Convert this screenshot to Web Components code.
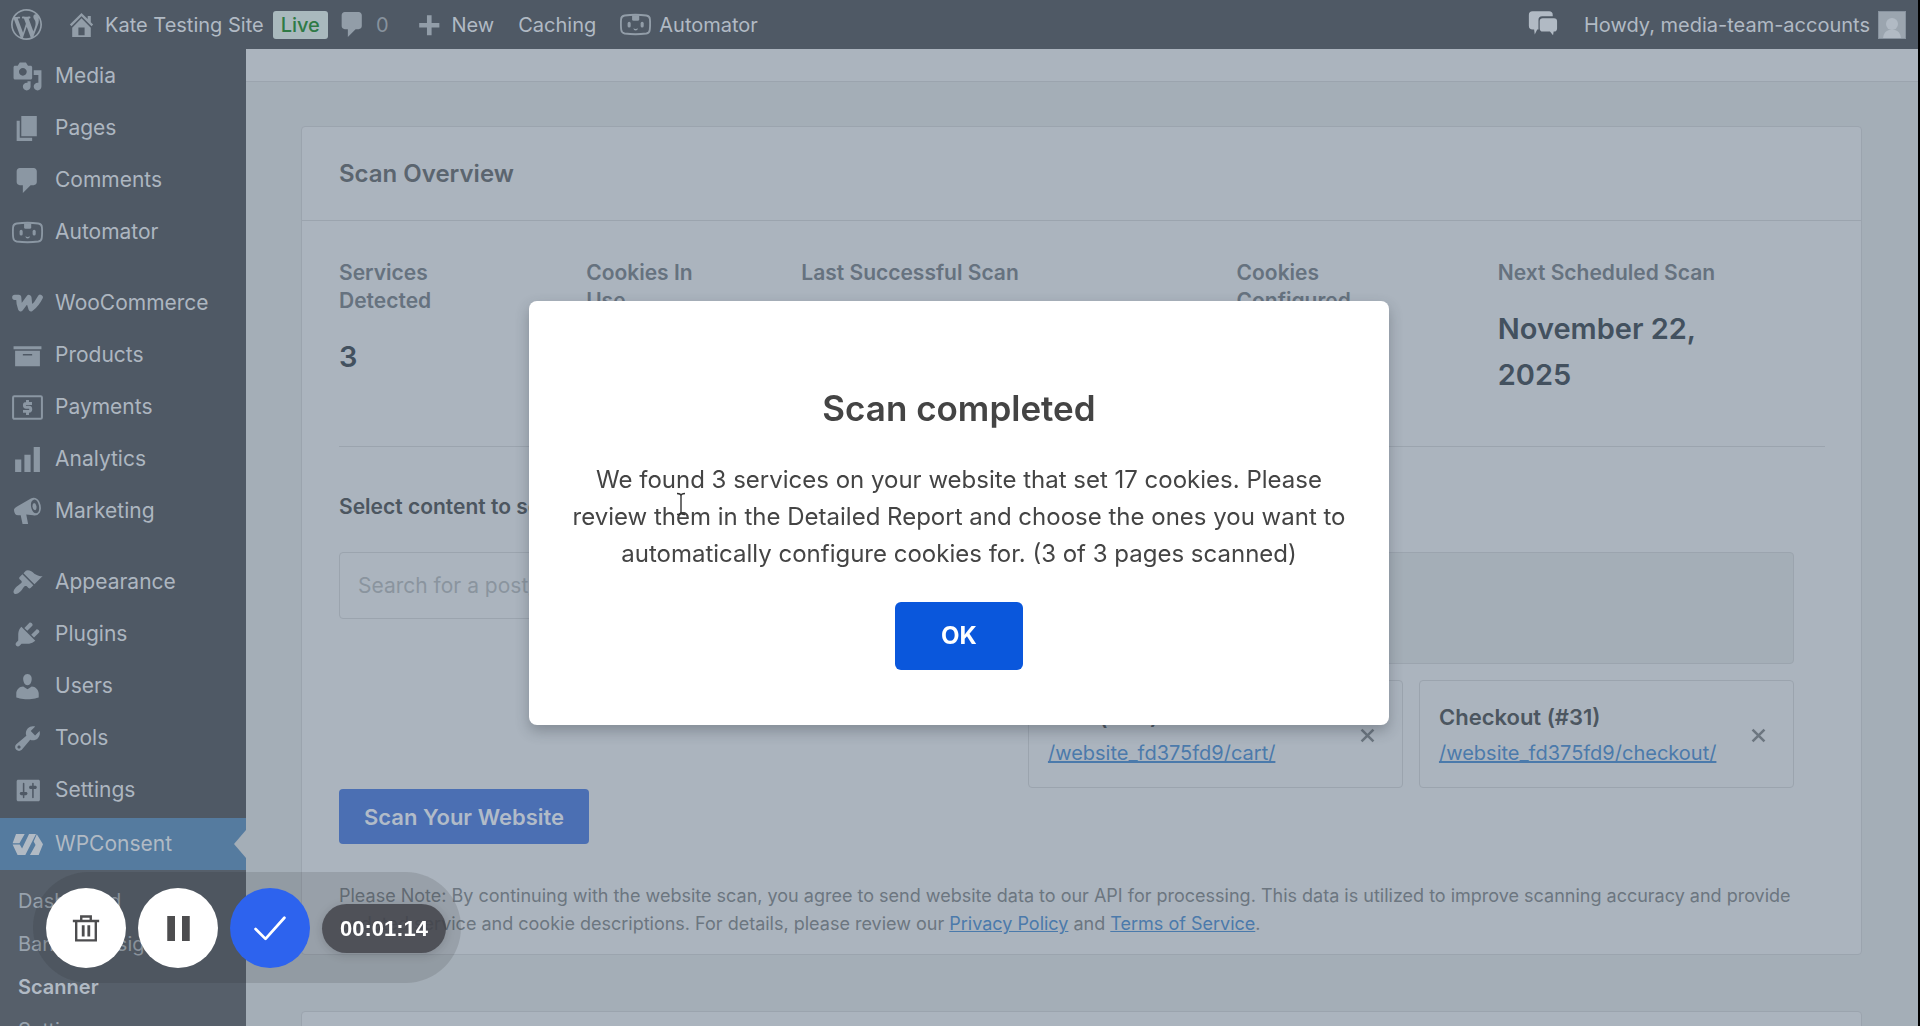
<!DOCTYPE html>
<html lang="en">
<head>
<meta charset="utf-8">
<title>Scanner - WPConsent</title>
<style>
  html, body {
    margin: 0;
    height: 100%;
    overflow: hidden;
  }
  body {
    font-family: Inter, "Liberation Sans", sans-serif;
    font-size: 20px;
    line-height: 28px;
    background: #000;
    --surface: #abb4be;
    --page: #a4aeb7;
    --chrome: #4f5965;
    --line: #9ba4ae;
    --link: #4b7aab;
    --text: #4c5660;
    --muted: #6c7680;
  }
</style>
</head>
<body>
<admin-shell>
  <admin-bar slot="bar"></admin-bar>
  <admin-menu slot="menu"></admin-menu>
  <scan-card heading="Scan Overview">
    <scan-stats>
      <scan-stat label="Services Detected">3</scan-stat>
      <scan-stat label="Cookies In Use">17</scan-stat>
      <scan-stat label="Last Successful Scan">November 21, 2025</scan-stat>
      <scan-stat label="Cookies Configured">0</scan-stat>
      <scan-stat label="Next Scheduled Scan">November 22, 2025</scan-stat>
    </scan-stats>
    <scan-form></scan-form>
  </scan-card>
  <scan-card></scan-card>
</admin-shell>
<alert-dialog heading="Scan completed">We found 3 services on your website that set 17 cookies. Please review them in the Detailed Report and choose the ones you want to automatically configure cookies for. (3 of 3 pages scanned)</alert-dialog>
<recorder-bar time="00:01:14"></recorder-bar>
<text-cursor></text-cursor>

<script>
const robot = `<path fill="none" stroke="currentColor" stroke-width="1.2" d="M3 4.2Q10 3.2 17 4.2Q19.2 4.5 19.3 6.6Q19.6 10 19.2 13.4Q19 15.4 17 15.8Q10 16.8 3 15.8Q1 15.4.8 13.4Q.4 10 .7 6.6Q.8 4.5 3 4.2z"/>
  <path d="M7.8 4h4.6v2.6q0 1-1 1H8.8q-1 0-1-1z"/><rect x="4.9" y="8.3" width="2" height="3.6" rx="1"/><rect x="13.3" y="8.3" width="2" height="3.6" rx="1"/>
  <path d="M8.6 12.4q1.5.9 3 0-.2 1.5-1.5 1.5t-1.5-1.5z"/>`;

const icons = {
  wordpress: '<path d="M20 10c0-5.51-4.49-10-10-10C4.48 0 0 4.49 0 10c0 5.52 4.48 10 10 10 5.51 0 10-4.48 10-10zM7.78 15.37L4.37 6.22c.55-.02 1.17-.08 1.17-.08.5-.06.44-1.13-.06-1.11 0 0-1.45.11-2.37.11-.18 0-.37 0-.58-.01C4.12 2.69 6.87 1.11 10 1.11c2.33 0 4.45.87 6.05 2.34-.68-.11-1.65.39-1.65 1.58 0 .74.45 1.36.9 2.1.35.61.55 1.36.55 2.46 0 1.49-1.4 5-1.4 5l-3.03-8.37c.54-.02.82-.17.82-.17.5-.05.44-1.25-.06-1.22 0 0-1.44.12-2.38.12-.87 0-2.33-.12-2.33-.12-.5-.03-.56 1.2-.06 1.22l.92.08 1.26 3.41zM17.41 10c.24-.64.74-1.87.43-4.25.7 1.29 1.05 2.71 1.05 4.25 0 3.29-1.73 6.24-4.4 7.78.97-2.59 1.94-5.2 2.92-7.78zM6.1 18.09C3.12 16.65 1.11 13.53 1.11 10c0-1.3.23-2.48.72-3.59C3.25 10.3 4.67 14.2 6.1 18.09zm4.03-6.63l2.58 6.98c-.86.29-1.76.45-2.71.45-.79 0-1.57-.11-2.29-.33.81-2.38 1.62-4.74 2.42-7.1z"/>',
  home: '<path d="M16 8.5l1.53 1.53-1.06 1.06L10 4.6l-6.47 6.49-1.06-1.06L10 2.5l4 4v-2h2v4zm-6-2.46l6 5.99V18H4v-5.97zM12 17v-5H8v5h4z"/>',
  comments: '<path d="M5 2h9c1.1 0 2 .9 2 2v7c0 1.1-.9 2-2 2h-2l-5 5v-5H5c-1.1 0-2-.9-2-2V4c0-1.1.9-2 2-2z"/>',
  plus: '<path d="M17 9v3h-5v5H9v-5H4V9h5V4h3v5h5z"/>',
  robot,
  chat: '<path d="M3.6 1.5h10.6q2.4 0 2.4 2.4v.7H9.8Q7.4 4.6 7.4 7v6.2H6.6L5 16.4 4.6 13.2H3.6Q1.2 13.2 1.2 10.8V3.9Q1.2 1.5 3.6 1.5z"/><path d="M10.2 5.9h7.2q2 0 2 2v4.6q0 2-2 2h-.2l-.4 2.4-2-2.4h-4.6q-2 0-2-2V7.9q0-2 2-2z"/>',
  media: '<path d="M13 11V4c0-.55-.45-1-1-1h-1.67L9 1H5L3.67 3H2c-.55 0-1 .45-1 1v7c0 .55.45 1 1 1h10c.55 0 1-.45 1-1zM7 4.5c1.38 0 2.5 1.12 2.5 2.5S8.38 9.5 7 9.5 4.5 8.38 4.5 7 5.62 4.5 7 4.5zM14 6h5v10.5c0 1.38-1.12 2.5-2.5 2.5S14 17.88 14 16.5s1.12-2.5 2.5-2.5c.17 0 .34.02.5.05V9h-3V6zm-4 8.05V13h2v3.5c0 1.38-1.12 2.5-2.5 2.5S7 17.88 7 16.5 8.12 14 9.5 14c.17 0 .34.02.5.05z"/>',
  pages: '<path d="M6 15V2h10v13H6zm-1 1h8v2H3V5h2v11z"/>',
  woo: '<path fill="none" stroke="currentColor" stroke-width="3.4" stroke-linecap="round" stroke-linejoin="round" d="M1.8 6H4.3Q4.3 10 5.6 13.4L10.9 6.2Q10.9 10 12.3 13.4Q16 10.5 18.2 6"/>',
  archive: '<path d="M19 4v2H1V4h18zM2 7h16v10H2V7zm11 3V9H7v1h6z"/>',
  payments: '<rect x=".7" y="2.7" width="18.6" height="14.6" rx=".8" fill="none" stroke="currentColor" stroke-width="1.3"/><path fill="none" stroke="currentColor" stroke-width="1.9" d="M12.9 7.4H9.2Q8 7.4 8 8.6T9.2 9.9H10.9Q12.100 9.900 12.100 11.200T10.900 12.500H7.100M10 5.200V7.400M10 12.500V14.800"/>',
  chart: '<path d="M18 18V2h-4v16h4zm-6 0V7H8v11h4zm-6 0v-8H2v8h4z"/>',
  megaphone: '<path fill-rule="evenodd" d="M1.3 9.2Q1.2 7.7 3 6.900L12.200 1.600Q15.500.2 17.600 3.600 19.500 7.400 18 10.700 16.600 13 13.600 12.400L9.200 12 10.400 18H6.800L5.600 12.400H4.200Q1.500 12.600 1.300 9.200zM14.400 2.300Q11.700 3 12.300 7 13.200 11.300 15.700 11.200 18 10.400 17.400 6.300 16.400 2.200 14.400 2.300zM14 4.600Q15.300 4.400 15.800 6.600 16 8.900 14.900 9.200 13.600 9 13.200 7 13.100 5 14 4.600z"/>',
  appearance: '<path d="M14.48 11.06L7.41 3.99l1.5-1.5c.5-.56 2.3-.47 3.51.32 1.21.8 1.43 1.28 2.91 2.1 1.18.64 2.45 1.26 4.45.85zm-.71.71L6.7 4.7 4.93 6.47c-.39.39-.39 1.02 0 1.41l1.06 1.06c.39.39.39 1.03 0 1.42-.6.6-1.43 1.11-2.21 1.69-.35.26-.7.53-1.01.84C1.43 14.23.4 16.08 1.4 17.07c.99 1 2.84-.03 4.18-1.36.31-.31.58-.66.85-1.02.57-.78 1.08-1.61 1.69-2.21.39-.39 1.02-.39 1.41 0l1.06 1.06c.39.39 1.02.39 1.41 0z"/>',
  plugins: '<path d="M13.11 4.36L9.87 7.6 8 5.73l3.24-3.24c.35-.34 1.05-.2 1.56.32.52.51.66 1.21.31 1.55zm-8 1.77l.91-1.12 9.01 9.01-1.19.84c-.71.71-2.63 1.16-3.82 1.16H6.14L4.9 17.26c-.59.59-1.54.59-2.12 0-.59-.58-.59-1.53 0-2.12l1.24-1.24v-3.88c0-1.13.4-3.19 1.09-3.89zm7.26 3.97l3.24-3.24c.34-.35 1.04-.21 1.55.31.52.51.66 1.21.31 1.55l-3.24 3.25z"/>',
  users: '<path d="M10 9.25c-2.27 0-2.73-3.44-2.73-3.44C7 4.02 7.82 2 9.97 2c2.16 0 2.98 2.02 2.71 3.81 0 0-.41 3.44-2.68 3.44zm0 2.57L12.72 10c2.39 0 4.52 2.33 4.52 4.53v2.49s-3.65 1.13-7.24 1.13c-3.65 0-7.24-1.13-7.24-1.13v-2.49c0-2.25 1.94-4.48 4.47-4.48z"/>',
  tools: '<path d="M16.68 9.77c-1.34 1.34-3.3 1.67-4.95.99l-5.41 6.52c-.99.99-2.59.99-3.58 0s-.99-2.59 0-3.57l6.52-5.42c-.68-1.65-.35-3.61.99-4.95 1.28-1.28 3.12-1.62 4.72-1.06l-2.89 2.89 2.82 2.82 2.86-2.87c.53 1.58.18 3.39-1.08 4.65zM3.81 16.21c.4.39 1.04.39 1.43 0 .4-.4.4-1.04 0-1.43-.39-.4-1.03-.4-1.43 0-.39.39-.39 1.03 0 1.43z"/>',
  settings: '<path d="M18 16V4c0-.55-.45-1-1-1H4c-.55 0-1 .45-1 1v12c0 .55.45 1 1 1h13c.55 0 1-.45 1-1zM8 11h1c.55 0 1 .45 1 1s-.45 1-1 1H8v1.5c0 .28-.22.5-.5.5s-.5-.22-.5-.5V13H6c-.55 0-1-.45-1-1s.45-1 1-1h1V5.5c0-.28.22-.5.5-.5s.5.22.5.5V11zm5-2h-1c-.55 0-1-.45-1-1s.45-1 1-1h1V5.5c0-.28.22-.5.5-.5s.5.22.5.5V7h1c.55 0 1 .45 1 1s-.45 1-1 1h-1v5.5c0 .28-.22.5-.5.5s-.5-.22-.5-.5V9z"/>',
  consent: '<path d="M2.6 3.2H8.2L4.8 9.200H.400zM.400 10H5L6.500 12.600 11 3.200H15.500L8.600 16.800H3.600zM16 3.400L20 9.900 17.200 16.800H11.600L15.200 10.400 14 8z"/>',
  close: '<path fill="none" stroke="currentColor" stroke-width="3" d="M3 3L17 17M17 3L3 17"/>',
  trash: '<path fill="none" stroke="currentColor" stroke-width="1.7" d="M.6 5H19.4M3 5V18.8H17V5M6.600 5V1.800H13.400V5"/><path d="M7 8h2v8H7zM11 8h2v8h-2z"/>',
  pause: '<path d="M1 0h6.2v20H1zM12.8 0H19v20h-6.2z"/>',
  check: '<path fill="none" stroke="currentColor" stroke-width="1.7" stroke-linecap="round" stroke-linejoin="round" d="M1 10.6L7.2 16.8 19 3.6"/>'
};

class WpIcon extends HTMLElement {
  connectedCallback() {
    this.attachShadow({ mode: 'open' }).innerHTML = `
      <style>
        :host { display: block; flex: none; width: 31px; height: 31px; }
        svg { display: block; width: 100%; height: 100%; fill: currentColor; }
      </style>
      <svg viewBox="0 0 20 20" aria-hidden="true">${icons[this.getAttribute('name')]}</svg>
    `;
  }
}
customElements.define('wp-icon', WpIcon);

class AdminShell extends HTMLElement {
  constructor() {
    super();
    this.attachShadow({ mode: 'open' }).innerHTML = `
      <style>
        :host {
          display: grid;
          grid-template: 49px minmax(0, 1fr) / 246px minmax(0, 1fr);
          height: 100vh;
          margin-right: 2px;
          overflow: hidden;
          background: var(--page);
        }
        ::slotted([slot=bar]) { grid-column: 1 / -1; }
        main { overflow: hidden; }
        .top {
          height: 32px;
          background: var(--surface);
          border-bottom: 1px solid var(--line);
        }
        .cards {
          display: grid;
          gap: 56px;
          padding: 44px 56px 44px 55px;
        }
      </style>
      <slot name="bar"></slot>
      <slot name="menu"></slot>
      <main>
        <div class="top"></div>
        <div class="cards"><slot></slot></div>
      </main>
    `;
  }
}
customElements.define('admin-shell', AdminShell);

class AdminBar extends HTMLElement {
  constructor() {
    super();
    this.attachShadow({ mode: 'open' }).innerHTML = `
      <style>
        :host {
          display: flex;
          align-items: center;
          gap: 24px;
          padding: 0 12px 0 11px;
          background: var(--chrome);
          color: #b1bac4;
        }
        a {
          display: flex;
          align-items: center;
          gap: 8px;
          color: inherit;
          text-decoration: none;
          white-space: nowrap;
        }
        .site { display: flex; align-items: center; gap: 9px; }
        wp-icon { color: #929da8; }
        .badge {
          padding: 0 8px;
          border-radius: 3px;
          background: #a9b9bd;
          color: #2f7a45;
          font-weight: 500;
        }
        .count { color: #87929d; }
        .right { display: flex; gap: 26px; margin-left: auto; }
        .right wp-icon { color: #b1bac4; }
        .avatar {
          width: 26px;
          height: 26px;
          border: 1px solid #87929e;
          background: #9ba5af;
          color: #b1bac4;
        }
      </style>
      <a href="#" aria-label="About WordPress"><wp-icon name="wordpress"></wp-icon></a>
      <div class="site">
        <a href="#"><wp-icon name="home"></wp-icon>Kate Testing Site</a>
        <span class="badge">Live</span>
        <a href="#" class="count"><wp-icon name="comments"></wp-icon>0</a>
      </div>
      <a href="#"><wp-icon name="plus"></wp-icon>New</a>
      <a href="#">Caching</a>
      <a href="#"><wp-icon name="robot"></wp-icon>Automator</a>
      <div class="right">
        <a href="#" aria-label="Messages"><wp-icon name="chat"></wp-icon></a>
        <a href="#">Howdy, media-team-accounts
          <svg class="avatar" viewBox="0 0 26 26" fill="currentColor" aria-hidden="true"><circle cx="13" cy="12" r="6"/><path d="M4 26q1-7 6-8h6q5 1 6 8z"/></svg>
        </a>
      </div>
    `;
  }
}
customElements.define('admin-bar', AdminBar);

const menuGroups = [
  [['media', 'Media'], ['pages', 'Pages'], ['comments', 'Comments'], ['robot', 'Automator']],
  [['woo', 'WooCommerce'], ['archive', 'Products'], ['payments', 'Payments'], ['chart', 'Analytics'], ['megaphone', 'Marketing']],
  [['appearance', 'Appearance'], ['plugins', 'Plugins'], ['users', 'Users'], ['tools', 'Tools'], ['settings', 'Settings']]
];

class AdminMenu extends HTMLElement {
  connectedCallback() {
    const item = ([icon, label]) => `<li><a href="#"><wp-icon name="${icon}"></wp-icon>${label}</a></li>`;
    this.attachShadow({ mode: 'open' }).innerHTML = `
      <style>
        :host {
          display: block;
          overflow: hidden;
          padding-top: 1px;
          background: var(--chrome);
          color: #adb6c0;
          font-size: 21px;
        }
        ul { list-style: none; margin: 0 0 19px; padding: 0; }
        ul:nth-of-type(3) { margin-bottom: 2px; }
        a {
          display: flex;
          align-items: center;
          gap: 12px;
          padding: 12px;
          color: inherit;
          text-decoration: none;
        }
        wp-icon { margin: -2px 0; color: #8b97a3; }
        .current { position: relative; background: #557b9f; color: #b1bac4; }
        .current wp-icon { color: #b1bac4; }
        .current::after {
          content: "";
          position: absolute;
          right: 0;
          top: 12px;
          border: 14px solid transparent;
          border-left-width: 0;
          border-right: 12px solid var(--page);
        }
        .sub {
          padding: 10px 0;
          background: #565f6a;
          color: #98a2ad;
          font-size: 20px;
        }
        .sub a { display: block; padding: 7px 18px 8px; }
        .sub .here { color: #b1bac4; font-weight: 600; }
      </style>
      ${menuGroups.map((group) => `<ul>${group.map(item).join('')}</ul>`).join('')}
      <a href="#" class="current"><wp-icon name="consent"></wp-icon>WPConsent</a>
      <nav class="sub">
        <a href="#">Dashboard</a>
        <a href="#">Banner Design</a>
        <a href="#" class="here">Scanner</a>
        <a href="#">Settings</a>
      </nav>
    `;
  }
}
customElements.define('admin-menu', AdminMenu);

class ScanCard extends HTMLElement {
  connectedCallback() {
    const heading = this.getAttribute('heading');
    this.attachShadow({ mode: 'open' }).innerHTML = `
      <style>
        :host {
          display: block;
          min-height: 92px;
          border: 1px solid var(--line);
          border-radius: 4px;
          background: var(--surface);
        }
        h2 {
          margin: 0;
          padding: 29px 37px 28px;
          border-bottom: 1px solid var(--line);
          color: #5b656f;
          font-size: 24px;
          font-weight: 600;
          line-height: 36px;
        }
        .body { padding: 0 36px 16px 37px; }
      </style>
      ${heading ? `<h2>${heading}</h2>` : ''}
      <div class="body"><slot></slot></div>
    `;
  }
}
customElements.define('scan-card', ScanCard);

class ScanStats extends HTMLElement {
  constructor() {
    super();
    this.attachShadow({ mode: 'open' }).innerHTML = `
      <style>
        :host {
          display: grid;
          grid-template-columns: 247fr 215fr 435fr 261fr 327fr;
          padding: 38px 0 48px;
          border-bottom: 1px solid var(--line);
        }
      </style>
      <slot></slot>
    `;
  }
}
customElements.define('scan-stats', ScanStats);

class ScanStat extends HTMLElement {
  connectedCallback() {
    this.attachShadow({ mode: 'open' }).innerHTML = `
      <style>
        :host { display: block; padding-right: 96px; color: #43515f; font-size: 29px; font-weight: 600; line-height: 46px; }
        h3 {
          margin: 0 0 19px;
          color: #66727f;
          font-size: 21px;
          font-weight: 600;
          line-height: 28px;
        }
      </style>
      <h3>${this.getAttribute('label')}</h3>
      <slot></slot>
    `;
  }
}
customElements.define('scan-stat', ScanStat);

class PageTile extends HTMLElement {
  connectedCallback() {
    const path = this.getAttribute('path');
    this.attachShadow({ mode: 'open' }).innerHTML = `
      <style>
        :host {
          display: flex;
          align-items: center;
          justify-content: space-between;
          padding: 18px 26px 16px 19px;
          border: 1px solid var(--line);
          border-radius: 4px;
        }
        strong { display: block; color: var(--text); font-size: 22px; font-weight: 600; line-height: 36px; }
        a { display: block; color: var(--link); font-size: 20px; line-height: 36px; }
        button { padding: 0; border: 0; background: none; color: #6c7680; }
        wp-icon { width: 17px; height: 17px; }
      </style>
      <div>
        <strong><slot></slot></strong>
        <a href="#">${path}</a>
      </div>
      <button type="button" aria-label="Remove"><wp-icon name="close"></wp-icon></button>
    `;
  }
}
customElements.define('page-tile', PageTile);

class ScanForm extends HTMLElement {
  constructor() {
    super();
    this.attachShadow({ mode: 'open' }).innerHTML = `
      <style>
        :host { display: block; padding-top: 46px; }
        label {
          display: block;
          margin-bottom: 31px;
          color: var(--text);
          font-size: 21px;
          font-weight: 600;
        }
        .select {
          display: grid;
          grid-template-columns: 671fr 765fr;
          gap: 17px;
          align-items: start;
          margin-right: 31px;
        }
        input {
          box-sizing: border-box;
          width: 100%;
          height: 67px;
          padding: 0 18px;
          border: 1px solid var(--line);
          border-radius: 4px;
          background: transparent;
          color: var(--text);
          font: inherit;
          font-size: 21px;
        }
        input::placeholder { color: #8a949e; opacity: 1; }
        .tiles { display: grid; grid-template-columns: 1fr 1fr; gap: 16px; }
        .all {
          grid-column: 1 / -1;
          height: 110px;
          border: 1px solid var(--line);
          border-radius: 4px;
          background: var(--page);
        }
        .scan {
          display: block;
          height: 55px;
          margin: 1px 0 38px;
          padding: 0 25px;
          border: 0;
          border-radius: 4px;
          background: #4b6fb3;
          color: #b1bbc8;
          font: inherit;
          font-size: 22px;
          font-weight: 600;
        }
        p { margin: 0; color: var(--muted); font-size: 18px; }
        a { color: var(--link); }
      </style>
      <label for="content">Select content to scan</label>
      <div class="select">
        <input id="content" type="search" placeholder="Search for a post/page">
        <div class="tiles">
          <div class="all"></div>
          <page-tile path="/website_fd375fd9/cart/">Cart (#30)</page-tile>
          <page-tile path="/website_fd375fd9/checkout/">Checkout (#31)</page-tile>
        </div>
      </div>
      <button type="button" class="scan">Scan Your Website</button>
      <p>Please Note: By continuing with the website scan, you agree to send website data to our API for processing. This data is utilized to improve scanning accuracy and provide updated service and cookie descriptions. For details, please review our <a href="#">Privacy Policy</a> and <a href="#">Terms of Service</a>.</p>
    `;
  }
}
customElements.define('scan-form', ScanForm);

class AlertDialog extends HTMLElement {
  connectedCallback() {
    this.attachShadow({ mode: 'open' }).innerHTML = `
      <style>
        :host {
          position: fixed;
          inset: 0 2px 0 0;
          display: grid;
          place-items: center;
        }
        section {
          box-sizing: border-box;
          width: 860px;
          max-width: 100%;
          padding: 84px 40px 55px;
          border-radius: 8px;
          background: #fff;
          box-shadow: 0 6px 14px rgba(40, 46, 56, .3);
          color: #444;
          text-align: center;
        }
        h1 { margin: 0 0 30px; font-size: 35px; font-weight: 600; line-height: 46px; }
        p { margin: 0 0 30px; font-size: 24px; line-height: 37px; }
        button {
          height: 68px;
          padding: 0 46px;
          border: 0;
          border-radius: 6px;
          background: #0a57dc;
          color: #fff;
          font: inherit;
          font-size: 24px;
          font-weight: 700;
        }
      </style>
      <section role="dialog" aria-labelledby="title">
        <h1 id="title">${this.getAttribute('heading')}</h1>
        <p><slot></slot></p>
        <button type="button">OK</button>
      </section>
    `;
  }
}
customElements.define('alert-dialog', AlertDialog);

class RecorderBar extends HTMLElement {
  connectedCallback() {
    this.attachShadow({ mode: 'open' }).innerHTML = `
      <style>
        :host {
          position: fixed;
          left: 33px;
          bottom: 43px;
          display: flex;
          align-items: center;
          gap: 12px;
          padding: 16px 15px 15px 13px;
          border-radius: 56px;
          background: rgba(30, 30, 34, .13);
        }
        button {
          display: grid;
          place-items: center;
          width: 80px;
          height: 80px;
          padding: 0;
          border: 0;
          border-radius: 50%;
          background: #fff;
          color: #4d4d4f;
        }
        wp-icon { width: 28px; height: 28px; }
        .pause wp-icon { width: 25px; height: 25px; }
        .done { background: #2d63ee; color: #fff; }
        .done wp-icon { width: 32px; height: 32px; }
        time {
          padding: 0 18px;
          border-radius: 25px;
          background: rgba(66, 68, 74, .86);
          box-shadow: 0 2px 10px rgba(30, 30, 34, .18);
          color: #fff;
          font: bold 22px/49px "Liberation Sans", sans-serif;
        }
      </style>
      <button type="button" aria-label="Delete recording"><wp-icon name="trash"></wp-icon></button>
      <button type="button" class="pause" aria-label="Pause recording"><wp-icon name="pause"></wp-icon></button>
      <button type="button" class="done" aria-label="Finish recording"><wp-icon name="check"></wp-icon></button>
      <time>${this.getAttribute('time')}</time>
    `;
  }
}
customElements.define('recorder-bar', RecorderBar);

class TextCursor extends HTMLElement {
  constructor() {
    super();
    this.attachShadow({ mode: 'open' }).innerHTML = `
      <style>
        :host { position: fixed; left: 676px; top: 492px; pointer-events: none; }
        svg { display: block; }
      </style>
      <svg width="10" height="24" viewBox="0 0 10 24" fill="none" stroke="#333" stroke-width="1.4" aria-hidden="true">
        <path d="M1 1.5Q5 1.5 5 4Q5 1.5 9 1.5M5 4V20M1 22.5Q5 22.5 5 20Q5 22.5 9 22.5"/>
      </svg>
    `;
  }
}
customElements.define('text-cursor', TextCursor);
</script>
</body>
</html>
